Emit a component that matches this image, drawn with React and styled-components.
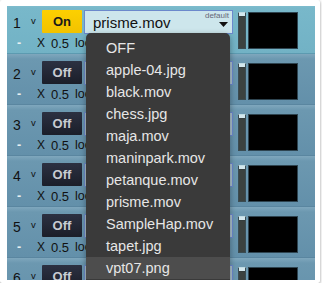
import React from "react";
import styled, { createGlobalStyle } from "styled-components";

const Global = createGlobalStyle`
  html, body { margin: 0; padding: 0; background: #fff; }
  body { font-family: "Liberation Sans", Arial, sans-serif; }
`;

const Card = styled.div`
  width: 320px;
  height: 283px;
  background: #fff;
  box-shadow: 0 1px 3px rgba(0,0,0,0.45);
  border-radius: 2px;
  padding: 6px 5px 3px 7px;
  box-sizing: border-box;
`;

const Panel = styled.div`
  position: relative;
  width: 308px;
  height: 274px;
  overflow: hidden;
  background: #6290aa;
`;

const List = styled.div`
  margin-top: -3px;
  display: flex;
  flex-direction: column;
`;

const Row = styled.div`
  height: 51px;
  box-sizing: border-box;
  display: flex;
  align-items: flex-start;
  background: ${p => p.$active
    ? "linear-gradient(to bottom, #86c2d2 0px, #78b8ca 5px, #72b2c5 100%)"
    : "linear-gradient(to bottom, #7fa7bd 0px, #6c98b0 5px, #6390aa 100%)"};
  border-bottom: 1px solid ${p => p.$active ? "#5c9ab0" : "#5a86a0"};
`;

const Controls = styled.div`
  width: 226px;
  margin-right: 5px;
  padding-top: 7px;
  display: flex;
  flex-direction: column;
`;

const Line1 = styled.div`
  display: flex;
  align-items: center;
  height: 23px;
  padding-left: 6px;
`;

const Num = styled.span`
  width: 18px;
  font-size: 14px;
  color: #111;
  padding-top: 3px;
`;

const Caret = styled.span`
  width: 11px;
  font-size: 9.5px;
  color: #111;
  align-self: flex-start;
  padding-top: 5px;
`;

const Toggle = styled.div`
  width: 40px;
  height: 23px;
  margin-right: 2px;
  display: flex;
  align-items: center;
  justify-content: center;
  font-weight: bold;
  font-size: 13px;
  border-radius: 1px;
  color: ${p => p.$on ? "#1a1a1a" : "#c9ccd2"};
  background: ${p => p.$on
    ? "linear-gradient(#fdd000, #f2c200)"
    : "linear-gradient(#2c3142, #1b1e29)"};
`;

const Field = styled.div`
  position: relative;
  flex: 1;
  height: 24px;
  margin-top: 1px;
  box-sizing: border-box;
  border: 1px solid #6c89cc;
  background: ${p => p.$active ? "#cde6ec" : "#a9bfcc"};
  display: flex;
  align-items: center;
  padding-left: 8px;
  font-size: 15px;
  color: #111;
`;

const Default = styled.span`
  position: absolute;
  right: 3px;
  top: 0px;
  font-size: 8px;
  color: #667;
`;

const Arrow = styled.svg`
  position: absolute;
  right: 4px;
  top: 11px;
`;

const Line2 = styled.div`
  display: flex;
  align-items: center;
  height: 20px;
  font-size: 12.5px;
  color: #111;
`;

const Minus = styled.span`
  width: 20px;
  padding-left: 10px;
  color: #e8f0f2;
  font-weight: bold;
`;

const Cross = styled.span`
  width: 14px;
  font-size: 12px;
`;

const Value = styled.span`
  width: 24px;
  font-size: 13px;
`;

const Slider = styled.div`
  width: 8px;
  height: 37px;
  margin-top: 9px;
  margin-right: 2px;
  box-sizing: border-box;
  background: linear-gradient(to bottom, #d4e8ee 0, #d4e8ee 3px, #2e3a3c 3px, #3b4240 4px, #3b4240 100%);
  border: 1px solid #3a4c52;
  border-top-color: #c0dce4;
`;

const Preview = styled.div`
  width: 50px;
  height: 37px;
  margin-top: 9px;
  box-sizing: border-box;
  background: #000;
  border: 1px solid #2e4450;
`;

const Menu = styled.div`
  position: absolute;
  left: 79px;
  top: 27px;
  width: 144px;
  height: 260px;
  padding-top: 4px;
  box-sizing: border-box;
  background: #3a3a3a;
  border-radius: 5px 5px 0 0;
  box-shadow: 0 2px 6px rgba(0,0,0,0.35);
`;

const Item = styled.div`
  height: 22px;
  display: flex;
  align-items: center;
  padding-left: 20px;
  font-size: 14.5px;
  color: #e6e6e6;
  background: ${p => p.$hl ? "#4d4d4d" : "transparent"};
`;

const rows = [1, 2, 3, 4, 5, 6];
const files = ["OFF", "apple-04.jpg", "black.mov", "chess.jpg", "maja.mov", "maninpark.mov", "petanque.mov", "prisme.mov", "SampleHap.mov", "tapet.jpg", "vpt07.png"];

export default function App() {
  return (
    <>
      <Global />
      <Card>
        <Panel>
          <List>
            {rows.map(n => {
              const active = n === 1;
              return (
                <Row key={n} $active={active}>
                  <Controls>
                    <Line1>
                      <Num>{n}</Num>
                      <Caret>v</Caret>
                      <Toggle $on={active}>{active ? "On" : "Off"}</Toggle>
                      <Field $active={active}>
                        {active ? "prisme.mov" : ""}
                        {active && <Default>default</Default>}
                        <Arrow width="9" height="5" viewBox="0 0 9 5">
                          <path d="M0 0 H9 L4.5 5 Z" fill="#111" />
                        </Arrow>
                      </Field>
                    </Line1>
                    <Line2>
                      <Minus>-</Minus>
                      <Cross>X</Cross>
                      <Value>0.5</Value>
                      <span>loop</span>
                    </Line2>
                  </Controls>
                  <Slider />
                  <Preview />
                </Row>
              );
            })}
          </List>
          <Menu>
            {files.map(f => (
              <Item key={f} $hl={f === "vpt07.png"}>{f}</Item>
            ))}
          </Menu>
        </Panel>
      </Card>
    </>
  );
}
